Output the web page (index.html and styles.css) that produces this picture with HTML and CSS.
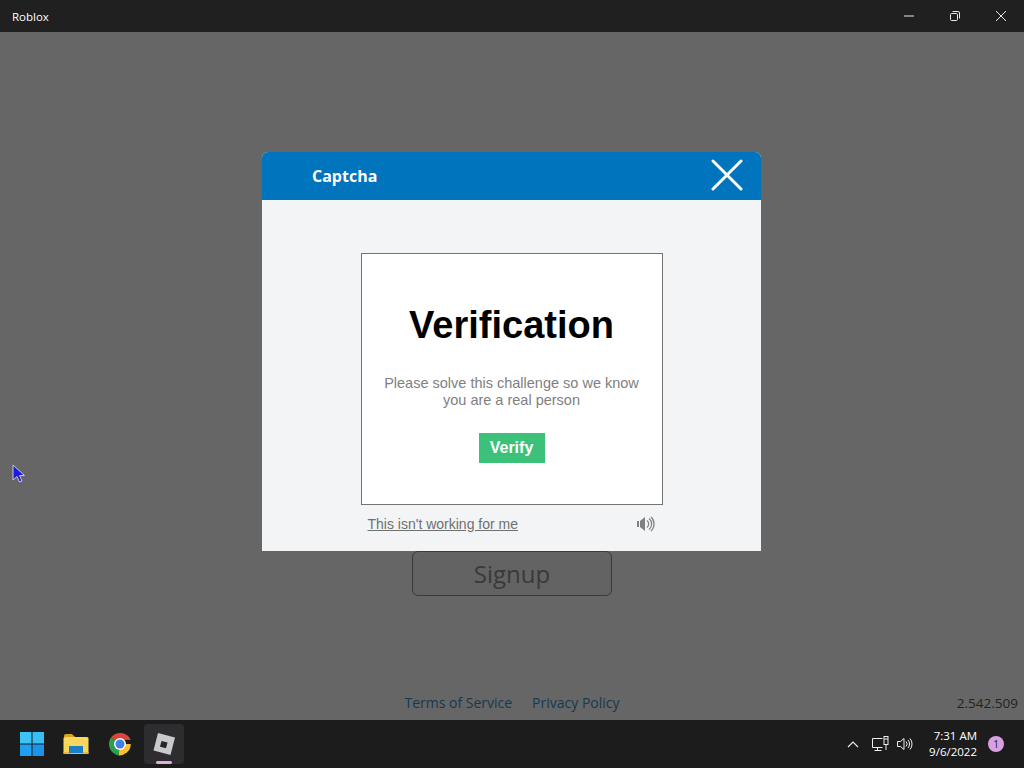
FILE: index.html
```html
<!DOCTYPE html>
<html lang="en">
<head>
  <meta charset="UTF-8">
  <title>Roblox</title>
  <link rel="stylesheet" href="styles.css">
</head>
<body>
  <div class="titlebar">
    <span class="app-name">Roblox</span>
    <div class="window-buttons">
      <span class="win-btn"><svg width="12" height="12" viewBox="0 0 12 12"><path d="M1 6h10" stroke="#e8e8e8" fill="none"/></svg></span>
      <span class="win-btn"><svg width="12" height="12" viewBox="0 0 12 12"><rect x="1.5" y="3.5" width="7" height="7" rx="1.2" stroke="#e8e8e8" fill="none"/><path d="M3.5 1.5h5.5a1.5 1.5 0 0 1 1.5 1.5v5.5" stroke="#e8e8e8" fill="none"/></svg></span>
      <span class="win-btn"><svg width="12" height="12" viewBox="0 0 12 12"><path d="M1 1l10 10M11 1L1 11" stroke="#e8e8e8" fill="none"/></svg></span>
    </div>
  </div>

  <div class="main">
    <button class="signup-button">Signup</button>
    <div class="footer-row">
      <span></span>
      <div class="footer-links">
        <a>Terms of Service</a>
        <a>Privacy Policy</a>
      </div>
      <span class="version">2.542.509</span>
    </div>

    <div class="captcha-modal">
      <div class="captcha-header">
        <span class="captcha-title">Captcha</span>
        <svg class="captcha-close" width="32" height="32" viewBox="0 0 32 32"><path d="M2 2l28 28M30 2L2 30" stroke="#fff" stroke-width="3" stroke-linecap="round" fill="none"/></svg>
      </div>
      <div class="captcha-body">
        <div class="challenge-box">
          <h1 class="challenge-title">Verification</h1>
          <p class="challenge-text">Please solve this challenge so we know<br>you are a real person</p>
          <button class="verify-button">Verify</button>
        </div>
        <div class="challenge-footer">
          <a class="not-working">This isn't working for me</a>
          <svg width="20" height="16" viewBox="0 0 20 16">
            <path d="M1 5h2v6H1zM4 5l5-4v14l-5-4z" fill="#808080"/>
            <path d="M11 4.5a4.5 4.5 0 0 1 0 7M13 2.5a7 7 0 0 1 0 11M15 1a9.5 9.5 0 0 1 0 14" stroke="#808080" stroke-width="1.2" fill="none"/>
          </svg>
        </div>
      </div>
    </div>

    <svg class="cursor" width="14" height="20" viewBox="0 0 14 20">
      <path d="M1 1v15l4-3.5 2.5 5.5 2.5-1-2.5-5.5h5z" fill="#1a1ae0" stroke="#c8c8e8" stroke-width="1"/>
    </svg>
  </div>

  <div class="taskbar">
    <div class="task-icons">
      <span class="task-icon">
        <svg width="24" height="24" viewBox="0 0 24 24">
          <rect x="0" y="0" width="11.5" height="11.5" fill="#3cc4f8"/>
          <rect x="12.5" y="0" width="11.5" height="11.5" fill="#38bdf5"/>
          <rect x="0" y="12.5" width="11.5" height="11.5" fill="#1f9fee"/>
          <rect x="12.5" y="12.5" width="11.5" height="11.5" fill="#1a94e8"/>
        </svg>
      </span>
      <span class="task-icon">
        <svg width="26" height="22" viewBox="0 0 26 22">
          <path d="M1 3a2 2 0 0 1 2-2h6l3 3h-11z" fill="#d9a520"/>
          <rect x="0.5" y="4" width="25" height="17" rx="1.5" fill="#fbd65c"/>
          <rect x="6" y="13" width="14" height="8" fill="#1a7fc4"/>
          <rect x="0.5" y="19" width="25" height="2" fill="#e8b93a"/>
          <rect x="6" y="13" width="14" height="7" fill="#1a7fc4"/>
        </svg>
      </span>
      <span class="task-icon">
        <svg width="24" height="24" viewBox="0 0 24 24">
          <path d="M12 12L3 5.5A11.5 11.5 0 0 1 22.8 8H12z" fill="#dc4437"/>
          <path d="M12 12h10.8A11.5 11.5 0 0 1 10.5 23.4z" fill="#fbc02d"/>
          <path d="M12 12L10.5 23.4A11.5 11.5 0 0 1 3 5.5z" fill="#2e9e4f"/>
          <circle cx="12" cy="12" r="6" fill="#fff"/>
          <circle cx="12" cy="12" r="4.5" fill="#3f7fe8"/>
        </svg>
      </span>
      <span class="task-icon active">
        <svg width="26" height="26" viewBox="0 0 26 26">
          <path d="M7 2l17 4.5-4.5 17.5-17-4.5z" fill="#c9c9cc"/>
          <path d="M10.5 10l6 1.5-1.5 5.8-6-1.5z" fill="#26262a"/>
        </svg>
        <i class="active-bar"></i>
      </span>
    </div>
    <div class="tray">
      <svg class="tray-chevron" width="12" height="8" viewBox="0 0 12 8"><path d="M1 7l5-5 5 5" stroke="#eee" stroke-width="1.1" fill="none"/></svg>
      <svg class="tray-net" width="17" height="16" viewBox="0 0 17 16"><path d="M10.5 2.5H.5v9h10M5.500 11.500v3M2.500 14.500h7" stroke="#eee" fill="none"/><rect x="12" y=".5" width="4" height="8" stroke="#eee" fill="none"/><path d="M12 3h4M14 9v5" stroke="#eee" fill="none"/></svg>
      <svg class="tray-vol" width="17" height="14" viewBox="0 0 17 14"><path d="M.5 4.500h3l3.500-3v11l-3.500-3h-3z" stroke="#eee" fill="none"/><path d="M9 4.500a3.500 3.500 0 0 1 0 5M11 3a6 6 0 0 1 0 8M13 1.500a8.500 8.500 0 0 1 0 11" stroke="#eee" fill="none"/></svg>
      <div class="clock">
        <span>7:31 AM</span>
        <span>9/6/2022</span>
      </div>
      <span class="notify-badge">1</span>
    </div>
  </div>
</body>
</html>
```

FILE: styles.css
```css
body {
  margin: 0;
  width: 1024px;
  height: 768px;
  overflow: hidden;
  display: flex;
  flex-direction: column;
  font-family: "Open Sans", sans-serif;
  background: #666666;
}

.titlebar {
  height: 32px;
  background: #202020;
  color: #ffffff;
  display: flex;
  justify-content: space-between;
  align-items: center;
  padding-left: 12px;
  font-size: 11.5px;
}

.window-buttons {
  display: flex;
}

.win-btn {
  width: 46px;
  height: 32px;
  display: flex;
  justify-content: center;
  align-items: center;
}

.main {
  flex: 1;
  position: relative;
  display: flex;
  flex-direction: column;
  align-items: center;
  padding-top: 519px;
  box-sizing: border-box;
}

.signup-button {
  width: 200px;
  height: 45px;
  background: #636363;
  border: 1.5px solid #3a3a3a;
  border-radius: 6px;
  color: #393939;
  font-family: "Open Sans", sans-serif;
  font-size: 24px;
  padding: 0;
}

.footer-row {
  width: 100%;
  margin-top: 97px;
  display: grid;
  grid-template-columns: 1fr auto 1fr;
  align-items: center;
  font-size: 14px;
}

.footer-links {
  display: flex;
  gap: 20px;
  color: #16384f;
}

.version {
  justify-self: end;
  margin-right: 6px;
  color: #222222;
  font-size: 13.500px;
}

.captcha-modal {
  position: absolute;
  left: 262px;
  top: 120px;
  width: 499px;
  height: 399px;
  background: #f2f4f6;
  border-radius: 6px 6px 0 0;
  overflow: hidden;
}

.captcha-header {
  height: 48px;
  background: #0074bd;
  display: flex;
  justify-content: space-between;
  align-items: center;
  padding: 0 18px 0 50px;
}

.captcha-title {
  color: #ffffff;
  font-size: 16px;
  font-weight: 700;
}

.captcha-close {
  margin-top: -2px;
}

.captcha-body {
  padding-top: 53px;
  display: flex;
  flex-direction: column;
  align-items: center;
  font-family: "Liberation Sans", Arial, sans-serif;
}

.challenge-box {
  width: 302px;
  height: 252px;
  box-sizing: border-box;
  background: #ffffff;
  border: 1px solid #737373;
  display: flex;
  flex-direction: column;
  align-items: center;
  text-align: center;
}

.challenge-title {
  margin: 48px 0 0;
  font-size: 38px;
  line-height: 46px;
  font-weight: 700;
  color: #000000;
}

.challenge-text {
  margin: 27px 0 0;
  font-size: 14.500px;
  line-height: 17px;
  color: #808080;
}

.verify-button {
  margin-top: 24px;
  width: 66px;
  height: 30px;
  padding: 0;
  border: none;
  background: #3cc17a;
  color: #ffffff;
  font-family: "Liberation Sans", Arial, sans-serif;
  font-size: 16px;
  font-weight: 700;
}

.challenge-footer {
  width: 288px;
  margin-top: 10px;
  display: flex;
  justify-content: space-between;
  align-items: center;
  height: 18px;
}

.not-working {
  font-size: 14px;
  color: #707070;
  text-decoration: underline;
}

.cursor {
  position: absolute;
  left: 12px;
  top: 432px;
}

.taskbar {
  height: 48px;
  background: #1c1c1c;
  display: flex;
  justify-content: space-between;
  align-items: center;
  color: #ffffff;
}

.task-icons {
  display: flex;
  align-items: center;
  gap: 4px;
  padding-left: 12px;
}

.task-icon {
  position: relative;
  width: 40px;
  height: 40px;
  border-radius: 4px;
  display: flex;
  justify-content: center;
  align-items: center;
}

.task-icon.active {
  background: #2d2d30;
}

.active-bar {
  position: absolute;
  left: 12px;
  bottom: 0;
  width: 16px;
  height: 3px;
  border-radius: 2px;
  background: #e0b0d8;
}

.tray {
  display: flex;
  align-items: center;
  padding-right: 20px;
}

.tray-chevron {
  margin-right: 13px;
}

.tray-vol {
  margin-left: 8px;
}

.clock {
  margin-left: 15px;
  display: flex;
  flex-direction: column;
  align-items: flex-end;
  font-size: 11.500px;
  line-height: 16px;
}

.notify-badge {
  margin-left: 11px;
  width: 16px;
  height: 16px;
  border-radius: 50%;
  background: #d8a0e0;
  color: #202020;
  font-size: 10px;
  display: flex;
  justify-content: center;
  align-items: center;
}
```
